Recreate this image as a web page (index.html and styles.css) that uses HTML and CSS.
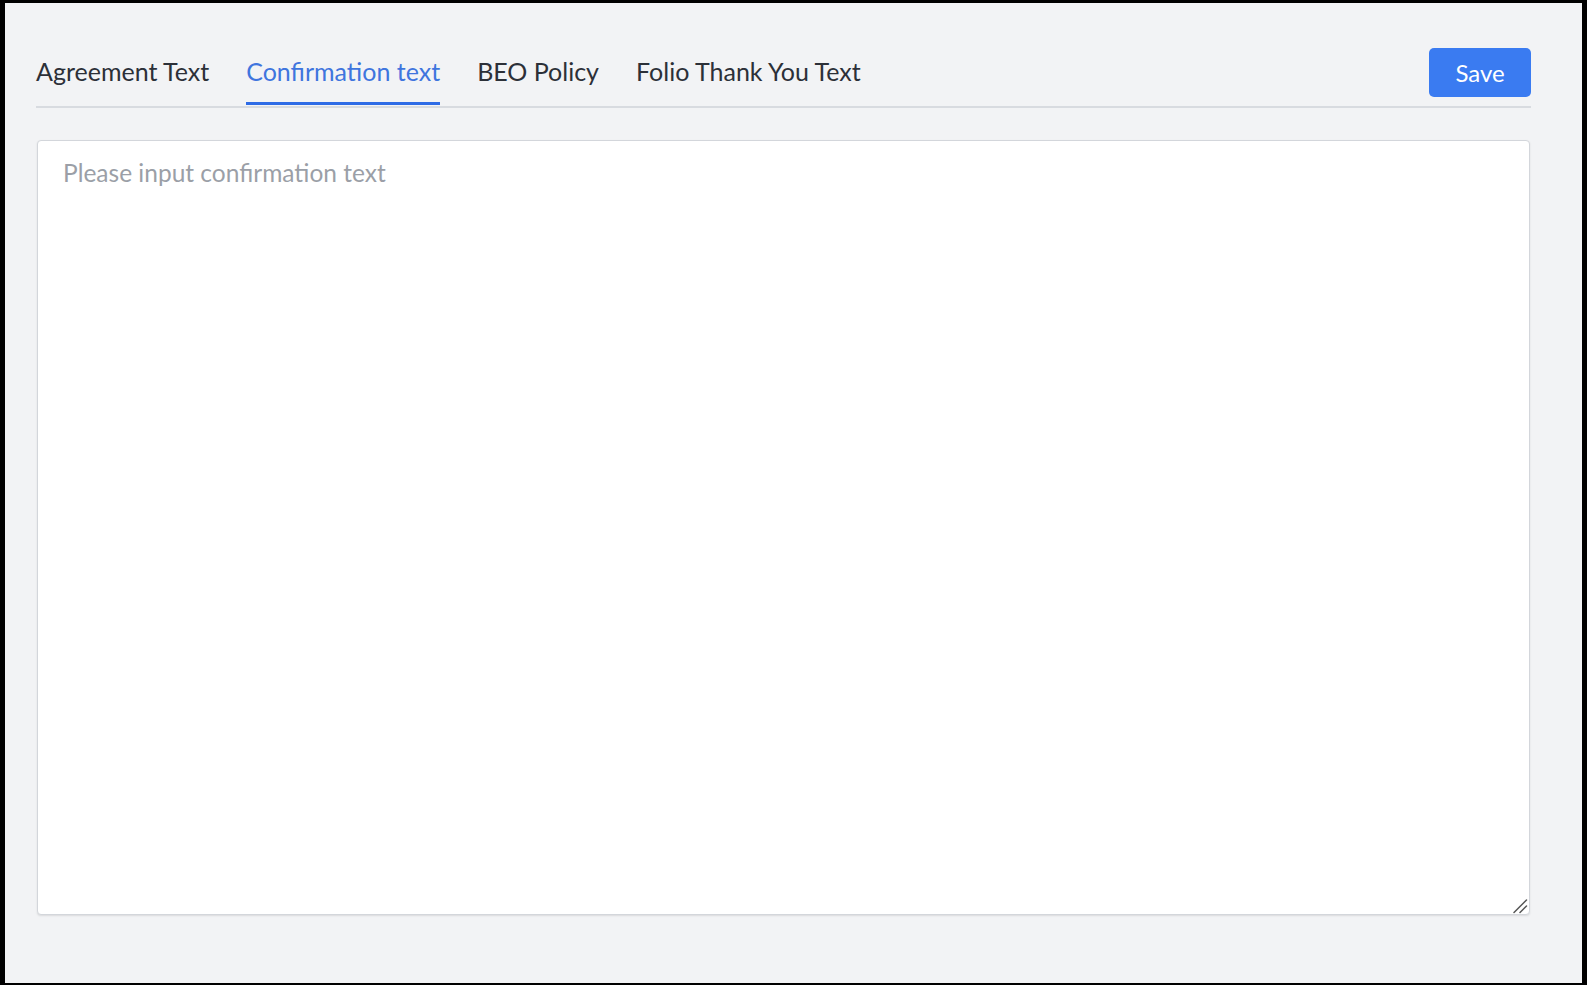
FILE: index.html
```html
<!DOCTYPE html>
<html lang="en">
<head>
<meta charset="utf-8">
<title>Texts</title>
<link rel="stylesheet" href="styles.css">
</head>
<body>
<div class="page">
  <div class="header">
    <nav class="tabs">
      <a class="tab">Agreement Text</a>
      <a class="tab active">Confirmation text</a>
      <a class="tab">BEO Policy</a>
      <a class="tab">Folio Thank You Text</a>
    </nav>
    <button class="save">Save</button>
  </div>
  <div class="editor-wrap">
    <textarea class="editor" placeholder="Please input confirmation text"></textarea>
    <svg class="grip" width="16" height="16" viewBox="0 0 16 16" aria-hidden="true">
      <path d="M2 14.5 L14.5 2 M8 14.5 L14.5 8" stroke="#555" stroke-width="1.5" stroke-linecap="round" fill="none"/>
    </svg>
  </div>
</div>
</body>
</html>
```
FILE: styles.css
```css
html, body {
  margin: 0;
  padding: 0;
  background: #000;
}
body {
  font-family: Lato, "Noto Sans", sans-serif;
}
.page {
  box-sizing: border-box;
  margin: 3px 5px 2px 5px;
  height: 980px;
  background: #f2f3f5;
  padding: 0 51px 0 31px;
}
.header {
  display: flex;
  align-items: flex-end;
  height: 103px;
  border-bottom: 2px solid #d8dbe0;
}
.tabs {
  display: flex;
  gap: 37px;
}
.tab {
  display: block;
  font-size: 25px;
  line-height: 30px;
  padding-top: 1px;
  padding-bottom: 16px;
  border-bottom: 3px solid transparent;
  margin-bottom: 1px;
  color: #2c3038;
  cursor: pointer;
}
.tab.active {
  color: #3f75de;
  border-bottom-color: #2e6be6;
}
.save {
  margin-left: auto;
  margin-bottom: 9px;
  width: 102px;
  height: 49px;
  border: none;
  border-radius: 5px;
  background: #3a7bf1;
  color: #fff;
  font-family: Lato, "Noto Sans", sans-serif;
  font-size: 24px;
  cursor: pointer;
}
.editor-wrap {
  position: relative;
  margin: 32px 1px 0 1px;
}
.editor {
  display: block;
  box-sizing: border-box;
  width: 100%;
  height: 775px;
  padding: 15px 25px;
  border: 1px solid #d3d6db;
  border-radius: 4px;
  background: #fff;
  box-shadow: 0 1px 2px rgba(0, 0, 0, 0.1);
  font-family: Lato, "Noto Sans", sans-serif;
  font-size: 24.5px;
  line-height: 34px;
  color: #2c3038;
  outline: none;
  resize: none;
}
.editor::placeholder {
  color: #9b9fa7;
}
.grip {
  position: absolute;
  right: 2px;
  bottom: 1px;
  pointer-events: none;
}
```
